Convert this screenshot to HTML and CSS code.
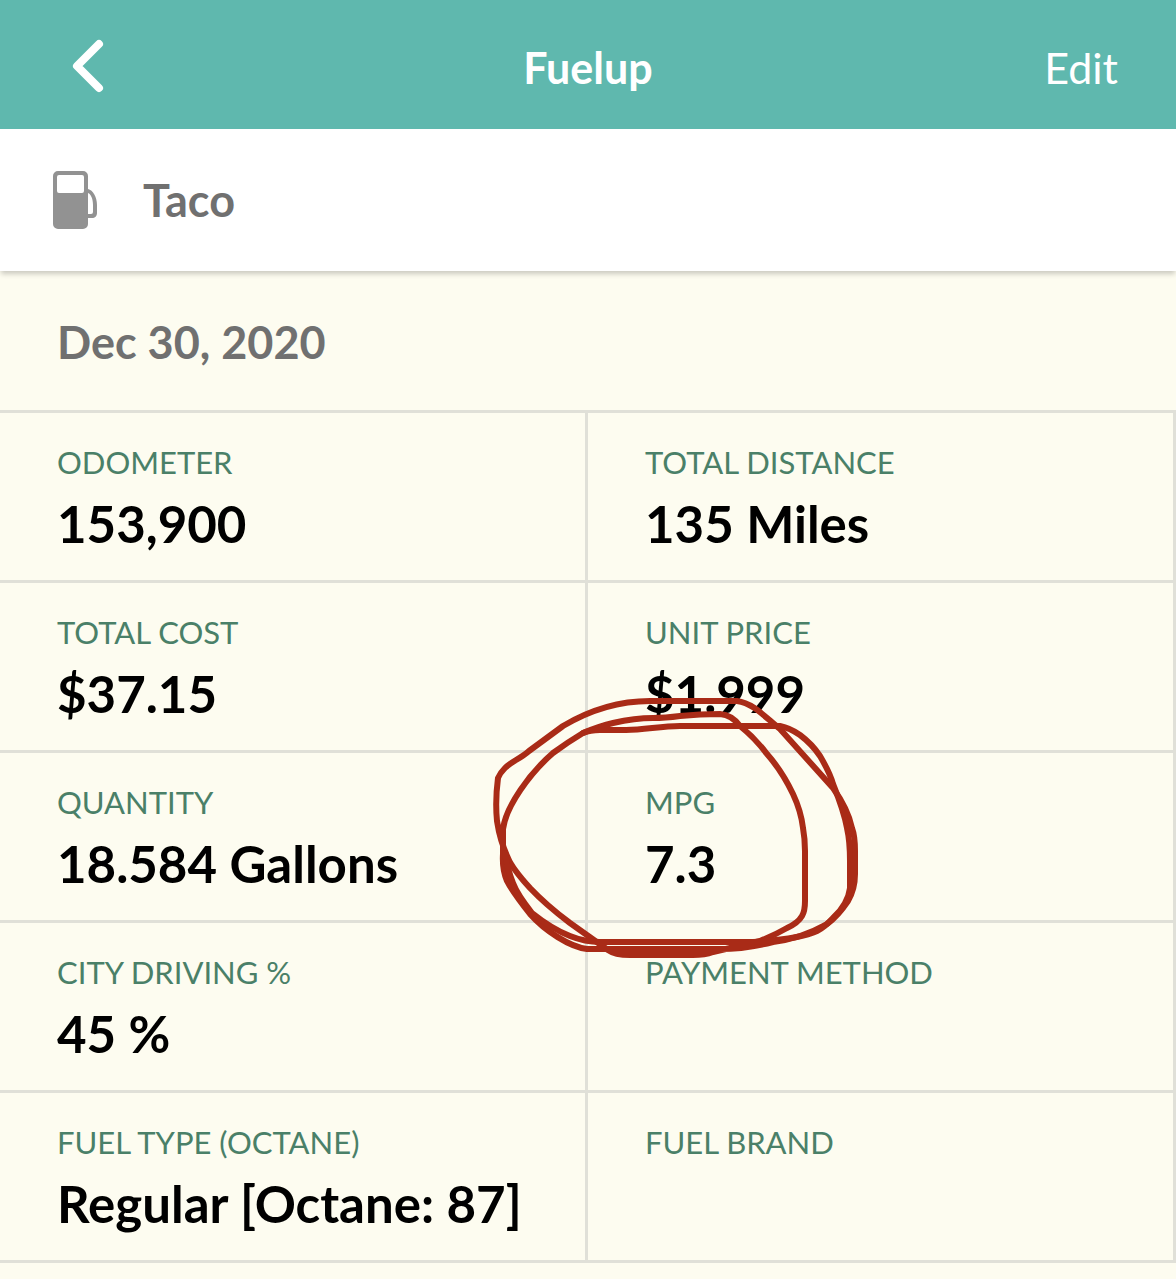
FILE: index.html
```html
<!DOCTYPE html>
<html lang="en">
<head>
  <meta charset="utf-8">
  <meta name="viewport" content="width=device-width, initial-scale=1">
  <title>Fuelup</title>
  <link rel="stylesheet" href="styles.css">
</head>
<body>
  <header class="topbar">
    <button class="back" type="button" aria-label="Back">
      <svg class="back-icon" viewBox="0 0 32 54" aria-hidden="true">
        <path d="M27 5 5 27l22 22" fill="none" stroke="currentColor" stroke-width="8" stroke-linecap="round" stroke-linejoin="round"/>
      </svg>
    </button>
    <h1 class="title">Fuelup</h1>
    <button class="edit" type="button">Edit</button>
  </header>

  <section class="vehicle">
    <svg class="pump" viewBox="0 0 44 58" aria-hidden="true">
      <path fill="#929292" fill-rule="evenodd" d="M5 0h25a5 5 0 0 1 5 5v13c5 1 9 8 9 16v8c0 3-2 5-5 5h-4v6a5 5 0 0 1-5 5H5a5 5 0 0 1-5-5V5a5 5 0 0 1 5-5zM6 4a2 2 0 0 0-2 2v14a2 2 0 0 0 2 2h23a2 2 0 0 0 2-2V6a2 2 0 0 0-2-2zM35 22v21h3a2 2 0 0 0 2-2v-7c0-6-2-11-5-12z"/>
    </svg>
    <h2 class="vehicle-name">Taco</h2>
  </section>

  <main>
    <h2 class="date">Dec 30, 2020</h2>
    <dl class="details">
      <div class="cell"><dt>ODOMETER</dt><dd>153,900</dd></div>
      <div class="cell"><dt>TOTAL DISTANCE</dt><dd>135 Miles</dd></div>
      <div class="cell"><dt>TOTAL COST</dt><dd>$37.15</dd></div>
      <div class="cell"><dt>UNIT PRICE</dt><dd>$1.999</dd></div>
      <div class="cell"><dt>QUANTITY</dt><dd>18.584 Gallons</dd></div>
      <div class="cell marked">
        <dt>MPG</dt>
        <dd>7.3
          <svg class="scribble" viewBox="490 690 376 276" aria-hidden="true">
            <path d="M497 820Q495 800 498 777Q500 772 505 767C512 760 520 758 529 750L563 725Q605 700 650 700H737C753 702 765 716 780 728L833 787Q848 808 852 827Q855 835 855 850V873Q855 888 848 900Q838 915 827 923Q800 938 773 941Q745 948 720 948H587C570 946 545 930 530 913Q512 890 507 880Q502 868 503 853V828C506 805 530 772 553 752Q568 741 583 732Q600 725 613 722Q635 717 653 717Q665 717 680 715Q700 713 720 713Q732 714 740 725Q755 737 767 753Q782 770 793 793Q801 810 803 827Q805 838 805 850V900Q805 910 802 915Q798 922 787 927Q775 934 760 940L713 951Q705 954 693 954H630Q615 954 608 949L570 922Q546 904 530 887Q512 867 508 857Q500 840 497 820Z"/>
            <path d="M583 732Q590 729 600 729H626C645 729 660 725 680 725H780Q790 727 800 734Q812 743 820 755Q830 772 833 783Q844 810 847 827Q850 840 850 860V887Q848 903 833 917Q825 926 817 930Q800 938 753 941H600Q585 941 570 935Q552 928 532 912Q517 893 513 882Q507 867 505 852"/>
          </svg>
        </dd>
      </div>
      <div class="cell"><dt>CITY DRIVING %</dt><dd>45 %</dd></div>
      <div class="cell"><dt>PAYMENT METHOD</dt><dd></dd></div>
      <div class="cell"><dt>FUEL TYPE (OCTANE)</dt><dd>Regular [Octane: 87]</dd></div>
      <div class="cell"><dt>FUEL BRAND</dt><dd></dd></div>
    </dl>
  </main>
</body>
</html>
```
FILE: styles.css
```css
* {
  box-sizing: border-box;
}

body {
  margin: 0;
  background: #fdfcf0;
  color: #000;
  font-family: Lato, "Liberation Sans", sans-serif;
}

h1, h2, dl, dd {
  margin: 0;
}

button {
  padding: 0;
  border: 0;
  background: none;
  color: inherit;
  font: inherit;
  cursor: pointer;
}

.topbar {
  display: grid;
  grid-template-columns: 1fr auto 1fr;
  align-items: start;
  padding: 39px 58px 32px;
  background: #5fb8ae;
  color: #fff;
  font-size: 43px;
  line-height: 58px;
}

.back {
  display: flex;
  justify-self: start;
  padding-left: 14px;
}

.back-icon {
  width: 32px;
  height: 54px;
}

.title {
  font-size: 43px;
  font-weight: 700;
}

.edit {
  justify-self: end;
}

.vehicle {
  position: relative;
  display: flex;
  align-items: center;
  gap: 46px;
  padding: 42px 53px;
  background: #fff;
  box-shadow: 0 4px 5px -1px rgba(0, 0, 0, 0.2);
}

.pump {
  width: 44px;
  height: 58px;
}

.vehicle-name,
.date {
  color: #707070;
  font-size: 45px;
  font-weight: 700;
  line-height: 58px;
}

.date {
  padding: 42px 57px 39px;
  border-bottom: 3px solid #e0e0d8;
}

.details {
  display: grid;
  grid-template-columns: 1fr 1fr;
}

.cell {
  min-height: 170px;
  padding: 29px 55px 0 57px;
  border-right: 3px solid #e0e0d8;
  border-bottom: 3px solid #e0e0d8;
}

.cell dt {
  color: #4a8068;
  font-size: 31px;
  line-height: 40px;
}

.cell dd {
  padding-top: 10px;
  font-size: 51px;
  font-weight: 700;
  line-height: 64px;
}

.marked {
  position: relative;
}

.scribble {
  position: absolute;
  top: -62px;
  left: -98px;
  width: 376px;
  height: 276px;
  fill: none;
  stroke: #a92b17;
  stroke-width: 6;
  stroke-linejoin: round;
  stroke-linecap: round;
  pointer-events: none;
}
```
